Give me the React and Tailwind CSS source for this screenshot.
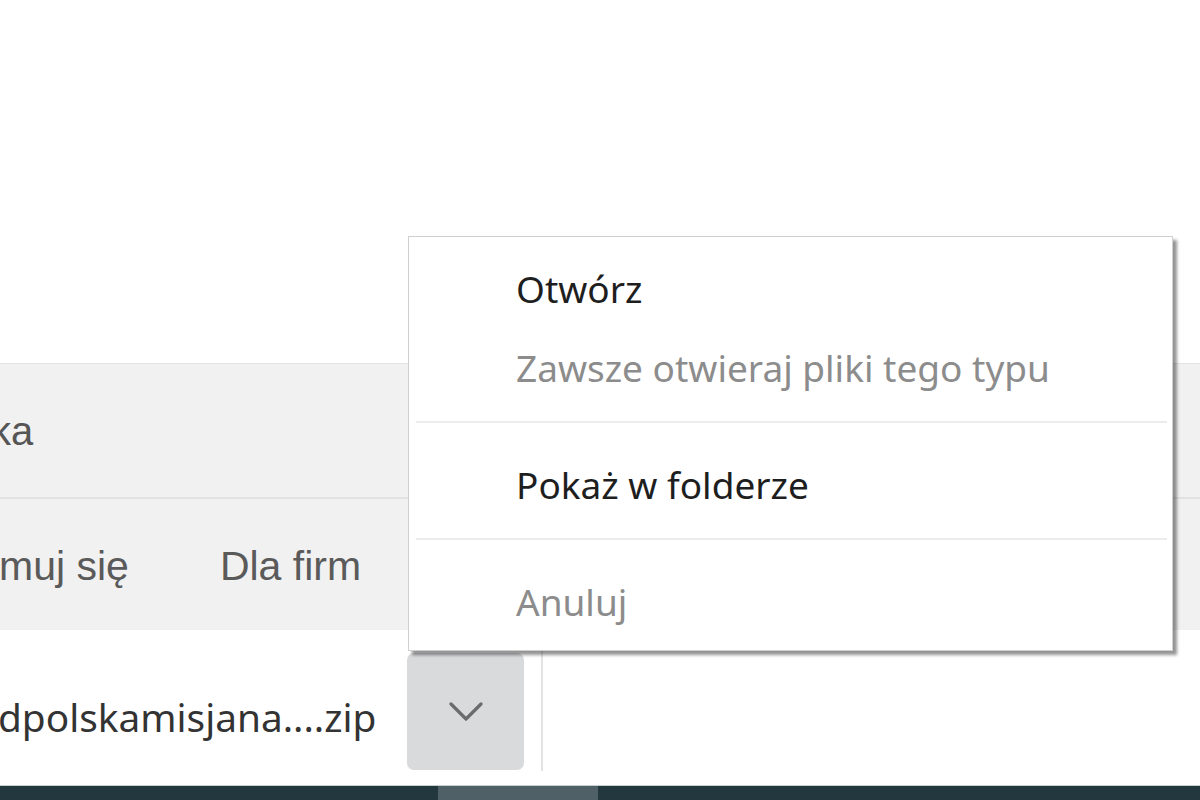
import { useState } from "react";

const menuFont = { fontFamily: '"Noto Sans", "Open Sans", sans-serif' };

function MenuItem({ label, disabled }) {
  return (
    <div
      className={`h-[79px] flex items-center pl-[107px] text-[37px] whitespace-nowrap ${
        disabled ? "text-[#8c8c8c]" : "text-[#1e1e1e]"
      }`}
    >
      {label}
    </div>
  );
}

function Separator() {
  return <div className="mt-[14px] mb-[22px] ml-[7px] mr-[5px] h-[2px] bg-[#ececec]" />;
}

export default function App() {
  const [open] = useState(true);

  return (
    <div className="relative w-[1200px] h-[800px] overflow-hidden bg-white font-['Liberation_Sans',Arial,sans-serif]">
      <div className="flex flex-col h-full">
        {/* page above */}
        <div className="h-[363px] bg-white" />

        {/* grey nav bands */}
        <div className="h-[134px] bg-[#f1f1f1] border-t border-[#e4e4e4] flex items-center">
          <span className="-ml-[9px] text-[40px] text-[#555]">ka</span>
        </div>
        <div className="h-[2px] bg-[#e2e2e2]" />
        <div className="h-[131px] bg-[#f1f1f1] flex items-center pt-[4px]">
          <span className="-ml-[1px] text-[41px] text-[#5a5a5a]">muj się</span>
          <span className="ml-[91px] text-[41px] text-[#5a5a5a]">Dla firm</span>
        </div>

        {/* download shelf */}
        <div className="h-[155px] bg-white flex items-center">
          <div className="w-[407px] shrink-0 pt-[20px]">
            <span
              className="block -ml-[2px] text-[38.8px] text-[#333] whitespace-nowrap"
              style={menuFont}
            >
              dpolskamisjana....zip
            </span>
          </div>
          <button className="mt-[8px] w-[117px] h-[117px] rounded-[7px] bg-[#d9dadc] flex items-center justify-center shrink-0">
            <svg width="34" height="20" viewBox="0 0 34 20" fill="none">
              <path
                d="M2 2 L17 17 L32 2"
                stroke="#6b6b6b"
                strokeWidth="3.2"
                strokeLinecap="round"
                strokeLinejoin="round"
              />
            </svg>
          </button>
          <div className="ml-[17px] mt-[4px] w-[2px] h-[122px] bg-[#e3e3e3]" />
        </div>

        {/* taskbar */}
        <div className="flex-1 bg-[#22383e] border-t border-[#c9cfd1] flex">
          <div className="ml-[438px] w-[160px] bg-[#4f6167]" />
        </div>
      </div>

      {/* context menu */}
      {open && (
        <div
          className="absolute left-[408px] top-[236px] w-[765px] h-[415px] bg-white border border-[#cfcfcf] shadow-[4px_4px_3px_rgba(0,0,0,0.42)] pt-[12px]"
          style={menuFont}
        >
          <MenuItem label="Otwórz" />
          <MenuItem label="Zawsze otwieraj pliki tego typu" disabled />
          <Separator />
          <MenuItem label="Pokaż w folderze" />
          <Separator />
          <MenuItem label="Anuluj" disabled />
        </div>
      )}
    </div>
  );
}
